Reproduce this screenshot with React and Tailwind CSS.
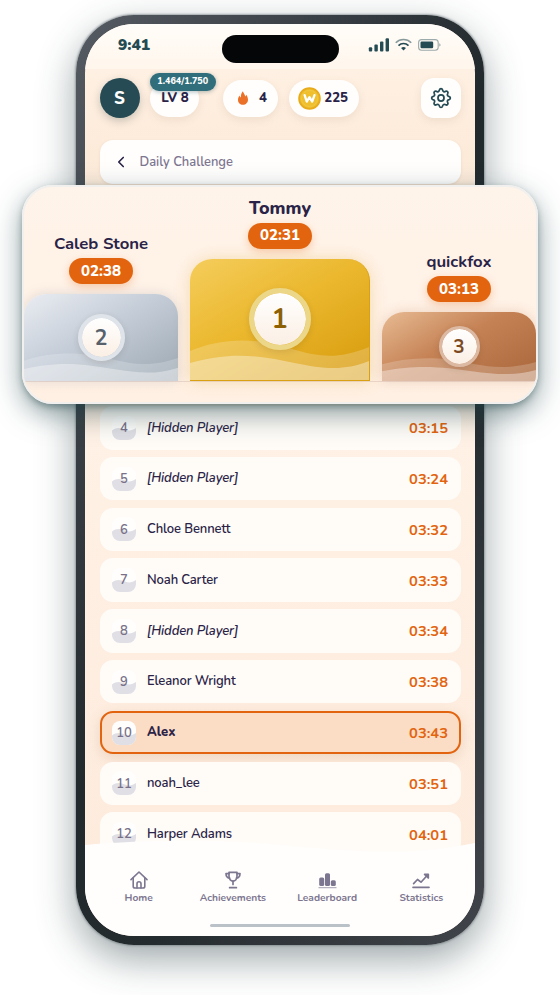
import React from "react";
import { ChevronLeft } from "lucide-react";

const players = [
  { rank: 4, name: "[Hidden Player]", time: "03:15", hidden: true },
  { rank: 5, name: "[Hidden Player]", time: "03:24", hidden: true },
  { rank: 6, name: "Chloe Bennett", time: "03:32" },
  { rank: 7, name: "Noah Carter", time: "03:33" },
  { rank: 8, name: "[Hidden Player]", time: "03:34", hidden: true },
  { rank: 9, name: "Eleanor Wright", time: "03:38" },
  { rank: 10, name: "Alex", time: "03:43", me: true },
  { rank: 11, name: "noah_lee", time: "03:51" },
  { rank: 12, name: "Harper Adams", time: "04:01" },
];

const podium = [
  {
    rank: 2,
    name: "Caleb Stone",
    time: "02:38",
    column: "w-[154px]",
    label: "text-[16.7px] font-bold",
    block:
      "h-[87px] bg-[linear-gradient(150deg,#eaedf2_0%,#c5cdd8_45%,#9ca8b2_100%)] shadow-[0_0_12px_rgba(130,140,155,0.25)]",
    medal: "size-[47px] border-4 border-[#dfe4ea] text-[21px] text-[#56616c]",
    wave: "h-[28px]",
  },
  {
    rank: 1,
    name: "Tommy",
    time: "02:31",
    column: "w-[180px]",
    label: "text-[18px] font-extrabold",
    block:
      "h-[122.5px] border-b border-r border-[#d9a013] bg-[linear-gradient(150deg,#f5cd5c_0%,#ebb82e_45%,#d79a0c_100%)] shadow-[0_0_16px_rgba(220,165,50,0.3)]",
    medal: "size-[62px] border-[5px] border-[#ecd688] text-[27px] text-[#8c6003]",
    wave: "h-[40px]",
  },
  {
    rank: 3,
    name: "quickfox",
    time: "03:13",
    column: "w-[154px]",
    label: "text-[16.7px] font-bold",
    block:
      "h-[69px] bg-[linear-gradient(150deg,#e8bb93_0%,#c58255_45%,#a9663a_100%)] shadow-[0_0_12px_rgba(180,110,70,0.25)]",
    medal: "size-[41px] border-[3px] border-[#dcb9a3] text-[19px] text-[#7c4a22]",
    wave: "h-[23px]",
  },
];

const SignalIcon = () => (
  <svg width="21" height="14" viewBox="0 0 21 14" fill="#244b54">
    <rect x="0.8" y="9.2" width="3.4" height="4.3" rx="1" />
    <rect x="6.4" y="6.6" width="3.4" height="6.9" rx="1" />
    <rect x="12" y="3.6" width="3.4" height="9.9" rx="1" />
    <rect x="17.6" y="0.3" width="3.4" height="13.2" rx="1" />
  </svg>
);

const WifiIcon = () => (
  <svg width="17" height="14" viewBox="0 0 18 14" fill="none" stroke="#244b54" strokeWidth="1.7">
    <path d="M0.8 4.6a11.6 11.6 0 0 1 16.4 0" opacity="0.55" />
    <path d="M3.7 7.6a7.5 7.5 0 0 1 10.6 0" />
    <path d="M6.4 10.2a4 4 0 0 1 5.2 0L9 12.8z" fill="#244b54" stroke="none" />
  </svg>
);

const BatteryIcon = () => (
  <svg width="23" height="12" viewBox="0 0 23 12" fill="none">
    <rect x="0.6" y="0.6" width="19.6" height="10.6" rx="3" stroke="#244b54" strokeOpacity="0.45" strokeWidth="1.1" />
    <rect x="2.5" y="2.5" width="12.7" height="6.8" rx="1.2" fill="#244b54" />
    <path d="M21.2 4.2v3.4c1-.4 1.4-1 1.4-1.7s-.4-1.3-1.4-1.7z" fill="#244b54" fillOpacity="0.4" />
  </svg>
);

const FlameIcon = () => (
  <svg width="10" height="14" viewBox="0 0 10 14" fill="#ec7128">
    <path d="M4.9.2C5.3 2.1 7 3.3 7.2 5.500c.5-.5.8-1 .9-1.700C9.300 5.200 10 7 10 8.800 10 11.700 7.800 13.800 5 13.800S0 11.800 0 9c0-1.800.7-3.200 1.500-4.400.2.900.6 1.500 1.300 2C2.700 4 3.500 1.800 4.900.2z" />
  </svg>
);

const CoinIcon = () => (
  <svg width="23" height="23" viewBox="0 0 23 23" fill="none">
    <circle cx="11.5" cy="11.5" r="10.4" fill="#efbf2d" stroke="#e8ab1b" strokeWidth="1.8" />
    <circle cx="11.5" cy="11.5" r="8" stroke="#f1c843" strokeWidth="1" />
    <path d="M6.600 8.200L8.800 14.600L11.500 10.200L14.200 14.600L16.500 8.200" stroke="#fff" strokeWidth="2.300" strokeLinecap="round" strokeLinejoin="round" />
  </svg>
);

const GearIcon = () => (
  <svg width="22" height="22" viewBox="0 0 24 24" fill="none" stroke="#244b54" strokeWidth="1.9" strokeLinejoin="round">
    <circle cx="12" cy="12" r="3.3" />
    <path d="M10.300 3.200a1.750 1.750 0 0 1 3.400 0c.3 1.900 1.900 2.500 3.400 1.500a1.700 1.700 0 0 1 2.300 2.300c-1 1.500-.4 3.100 1.500 3.400a1.700 1.700 0 0 1 0 3.300c-1.900.3-2.500 1.900-1.500 3.400a1.700 1.700 0 0 1-2.300 2.300c-1.500-1-3.100-.4-3.400 1.500a1.750 1.750 0 0 1-3.400 0c-.3-1.900-1.900-2.500-3.400-1.500a1.700 1.700 0 0 1-2.300-2.300c1-1.500.4-3.100-1.500-3.400a1.700 1.700 0 0 1 0-3.300c1.900-.3 2.500-1.900 1.500-3.400a1.700 1.700 0 0 1 2.300-2.300c1.500 1 3.100.4 3.400-1.500z" />
  </svg>
);

const HomeIcon = () => (
  <svg width="18" height="18" viewBox="0 0 18 18" fill="none" stroke="currentColor" strokeWidth="1.6" strokeLinecap="round" strokeLinejoin="round">
    <path d="M1 8.600L9 1l8 7.600" />
    <path d="M3.200 7v8.200a1.800 1.800 0 0 0 1.800 1.800h8a1.800 1.800 0 0 0 1.800-1.800V7" />
    <path d="M7 17v-4.200a2 2 0 0 1 4 0V17" />
  </svg>
);

const TrophyIcon = () => (
  <svg width="16" height="18" viewBox="0 0 16 18" fill="none" stroke="currentColor" strokeWidth="1.7" strokeLinecap="round" strokeLinejoin="round">
    <path d="M4 1.300h8v4c0 2.700-1.700 4.800-4 4.800S4 8 4 5.300z" />
    <path d="M4 2.600H1c0 2.700 1.200 4.300 3.600 4.600M12 2.600h3c0 2.700-1.200 4.300-3.600 4.600M8 10v3.500M4.600 16.700h6.800" />
  </svg>
);

const BarsIcon = () => (
  <svg width="19" height="18" viewBox="0 0 19 18" fill="currentColor">
    <rect x="1.2" y="6.5" width="5" height="8.6" rx="1.5" />
    <rect x="7" y="2.2" width="5" height="12.9" rx="1.5" />
    <rect x="12.8" y="9.2" width="5" height="5.9" rx="1.5" />
    <rect x="0.5" y="16.2" width="18" height="1" opacity="0.7" />
  </svg>
);

const TrendIcon = () => (
  <svg width="18" height="18" viewBox="0 0 18 18" fill="none" stroke="currentColor" strokeWidth="1.7" strokeLinecap="round" strokeLinejoin="round">
    <path d="M1.600 12.600L5.500 8.500 9 11.200l6.800-7.500" />
    <path d="M12.600 3.300h3.700V7z" fill="currentColor" />
    <path d="M1 16.300h16" />
  </svg>
);

const tabs = [
  { label: "Home", Icon: HomeIcon },
  { label: "Achievements", Icon: TrophyIcon },
  { label: "Leaderboard", Icon: BarsIcon },
  { label: "Statistics", Icon: TrendIcon },
];

const StatusBar = () => (
  <div className="flex h-[45px] shrink-0 items-start justify-between bg-gradient-to-b from-[#fffdf9] to-[#fff6ec] pl-[33px] pr-[34px]">
    <span className="mt-[10px] w-8 text-[15.5px] font-black leading-[22px] text-[#244b54]">9:41</span>
    <div className="ml-[42px] mt-[11px] h-7 w-[117px] rounded-full bg-[#050608]" />
    <div className="mt-[14px] flex items-center gap-[6px]">
      <SignalIcon />
      <WifiIcon />
      <BatteryIcon />
    </div>
  </div>
);

const pill =
  "flex h-[37px] items-center rounded-full bg-[#fffefd] text-[13.2px] font-extrabold text-[#2a2347] shadow-[0_3px_8px_rgba(120,80,50,0.1)]";

const Header = () => (
  <div className="flex shrink-0 items-center px-[14.5px] pt-[9px]">
    <div className="flex size-10 items-center justify-center rounded-full bg-[#274b54] pt-px text-[17px] font-extrabold text-white shadow-[0_3px_8px_rgba(40,60,60,0.25)]">
      S
    </div>
    <div className={`${pill} relative ml-[10.5px] w-[49px] justify-center pl-px pt-0.5`}>
      LV 8
      <span className="absolute left-0 -top-[7px] flex h-[18px] w-[65.5px] items-center justify-center rounded-full bg-[#306e7b] pt-px text-[9px] font-extrabold text-white shadow-[0_1px_4px_rgba(30,70,80,0.35)]">
        1.464/1.750
      </span>
    </div>
    <div className={`${pill} ml-[23.5px] w-[55.5px] justify-between pl-[15px] pr-[11px]`}>
      <FlameIcon />
      <span className="pt-px">4</span>
    </div>
    <div className={`${pill} ml-[11px] w-[70px] justify-between pl-[8.5px] pr-[11px]`}>
      <CoinIcon />
      <span className="pt-px">225</span>
    </div>
    <div className="ml-auto flex size-10 items-center justify-center rounded-[13px] bg-[#fffefd] shadow-[0_3px_8px_rgba(120,80,50,0.1)]">
      <GearIcon />
    </div>
  </div>
);

const PlayerRow = ({ rank, name, time, hidden, me }) => (
  <div
    className={`flex h-[43.5px] shrink-0 items-center rounded-[13px] ${
      me
        ? "border-2 border-[#e2640f] bg-[#fbdcc4] px-[10.5px] shadow-[0_4px_14px_rgba(150,90,40,0.16)]"
        : "bg-[#fffcf8] px-[12.5px]"
    }`}
  >
    <div className="relative flex size-6 items-center justify-center overflow-hidden rounded-lg bg-[#fffefd] text-[13px] font-semibold text-[#787189]">
      <svg className="absolute inset-0" width="24" height="24" viewBox="0 0 24 24" fill="#dfdfe5">
        <path d="M0 14.500C5 10.500 9 12 13 13.500S20 14.800 24 12V24H0z" />
      </svg>
      <span className="relative pt-0.5">{rank}</span>
    </div>
    <span
      className={`ml-[11px] pt-px text-[13px] text-[#2a2347] ${
        me ? "font-extrabold" : "font-semibold tracking-[-0.12px]"
      } ${hidden ? "italic" : ""}`}
    >
      {name}
    </span>
    <span className="ml-auto pt-px text-[14.7px] font-bold text-[#e2640f]">{time}</span>
  </div>
);

const TabBar = () => (
  <div className="absolute inset-x-0 bottom-0">
    <svg className="block h-[14px] w-full" viewBox="0 0 390 14" preserveAspectRatio="none" fill="#fffefd">
      <path d="M0 5C50 0.500 90 0.500 130 1C190 2 240 12 305 11.700C340 11.500 365 8 390 3V14H0z" />
    </svg>
    <div className="flex h-[82px] flex-col items-center bg-[#fffefd]">
      <div className="flex w-full px-[6.5px] pt-[17px]">
        {tabs.map(({ label, Icon }) => (
          <div key={label} className="flex flex-1 flex-col items-center text-[#7d7690]">
            <Icon />
            <span className="mt-[2px] text-[10.2px] font-bold leading-[14px]">{label}</span>
          </div>
        ))}
      </div>
      <div className="mt-[19px] h-[3px] w-[140px] rounded-full bg-[#bbc2c7]" />
    </div>
  </div>
);

const PodiumColumn = ({ rank, name, time, column, label, block, medal, wave }) => (
  <div className={`${column} flex flex-col items-center`}>
    <span className={`${label} leading-[25px] text-[#2a2347]`}>{name}</span>
    <span className="mb-[10px] mt-[2px] flex h-[26px] w-16 items-center justify-center rounded-full bg-[#e2640f] text-[15px] font-extrabold text-white shadow-[0_3px_8px_rgba(226,100,15,0.28)]">
      {time}
    </span>
    <div className={`${block} relative flex w-full items-center justify-center overflow-hidden rounded-t-[22px]`}>
      <svg
        className={`${wave} absolute inset-x-0 bottom-0 w-full`}
        viewBox="0 0 180 40"
        preserveAspectRatio="none"
        fill="#fff"
      >
        <path d="M0 11C25 1 50 -2 80 3C110 9 135 26 180 7V40H0z" fillOpacity="0.2" />
        <path d="M0 23C45 10 75 17 105 23C135 29 155 31 180 21V40H0z" fillOpacity="0.36" />
      </svg>
      <div
        className={`${medal} relative flex items-center justify-center rounded-full bg-gradient-to-b from-white to-[#fbefe4] bg-clip-padding pt-0.5 font-bold shadow-[0_2px_6px_rgba(70,50,30,0.14)]`}
      >
        {rank}
      </div>
    </div>
  </div>
);

export default function App() {
  return (
    <div className="relative h-[995px] w-[560px] overflow-hidden bg-white pt-[15px] font-['Nunito','Open_Sans',sans-serif]">
      {/* Phone */}
      <div className="mx-auto h-[930px] w-[408px] rounded-[58px] bg-[linear-gradient(120deg,#565c63_0%,#454b51_14%,#22292d_48%,#252c30_65%,#41454b_100%)] p-[9px] shadow-[0_0_2px_1px_rgba(110,120,125,0.6),0_14px_38px_rgba(40,60,65,0.46)]">
        <div className="relative flex h-full flex-col overflow-hidden rounded-[49px] bg-[linear-gradient(180deg,#fff3e7_0%,#fdebda_14%,#fff1e5_45%,#fdeadb_100%)]">
          <StatusBar />
          <Header />
          <div className="mx-[14.5px] mt-[22px] flex h-[43.5px] shrink-0 items-center rounded-[13px] bg-[#fffefd] pl-[12px] shadow-[0_1px_3px_rgba(120,80,50,0.12)]">
            <ChevronLeft size={18} strokeWidth={2.2} className="text-[#2a2347]" />
            <span className="ml-[10px] pt-px text-[12.9px] font-semibold text-[#7d7690]">Daily Challenge</span>
          </div>
          <div className="mt-[222.5px] flex flex-col gap-[7.3px] px-[14.5px]">
            {players.map((player) => (
              <PlayerRow key={player.rank} {...player} />
            ))}
          </div>
          <TabBar />
        </div>
      </div>

      {/* Podium card floating over the phone */}
      <div className="absolute left-[22px] top-[185px] h-[219px] w-[516px] rounded-[31px] shadow-[0_10px_28px_rgba(30,65,70,0.5),0_3px_6px_rgba(30,65,70,0.35)]">
        <div className="flex h-full flex-col justify-end overflow-hidden rounded-[31px] border-2 border-[#f1f0ee] bg-gradient-to-b from-[#fff4ea] to-[#fff0e3]">
          <div className="flex items-end justify-between border-b border-[#ecd9cf]">
            {podium.map((place) => (
              <PodiumColumn key={place.rank} {...place} />
            ))}
          </div>
          <div className="h-[20px]" />
        </div>
      </div>
    </div>
  );
}
